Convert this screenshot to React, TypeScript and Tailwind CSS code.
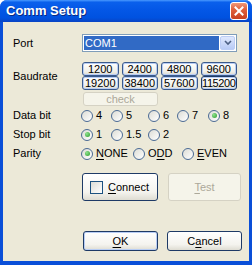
import React from 'react'

const font = { fontFamily: '"Liberation Sans", Arial, sans-serif' }

const BaudButton = ({ label, dark }: { label: string; dark?: boolean }) => (
  <div
    className={`h-[14px] flex items-center justify-center rounded-[3px] border bg-[linear-gradient(to_bottom,#ffffff,#f0f0ea_70%,#dcdad0)] text-[11px] leading-none text-black shadow-[inset_0_0_0_1px_#b8cdf4] ${dark ? 'border-[#1e3a66]' : 'border-[#3a5a8c]'}`}
  >
    <span className={label.length > 5 ? 'tracking-[-0.4px]' : ''}>{label}</span>
  </div>
)

const Radio = ({ label, checked, w, u }: { label: string; checked?: boolean; w?: string; u?: number }) => (
  <div className={`flex items-center gap-[3px] ${w ?? ''}`}>
    <span className="relative size-[12px] shrink-0 rounded-full border border-[#4a6a94] bg-[linear-gradient(135deg,#dcdcd5,#ffffff)] flex items-center justify-center">
      {checked && <span className="size-[5px] rounded-full bg-[radial-gradient(circle_at_35%_35%,#8fe28f,#2a9a2a)]" />}
    </span>
    <span className="text-[11px] leading-none text-black">
      {u === undefined ? (
        label
      ) : (
        <>
          {label.slice(0, u)}
          <span className="underline underline-offset-[2px]">{label[u]}</span>
          {label.slice(u + 1)}
        </>
      )}
    </span>
  </div>
)

export default function App() {
  return (
    <div style={font} className="w-[252px] h-[265px] flex flex-col bg-[#0a4fd8] rounded-t-[7px] overflow-hidden select-none">
      {/* title bar */}
      <div className="h-[22px] shrink-0 flex items-center justify-between pl-[6px] pr-[4px] bg-[linear-gradient(to_bottom,#4a9aff_0%,#0a60ec_10%,#0457e6_45%,#0052e0_80%,#0a44c4_100%)]">
        <span className="text-[13px] font-bold text-white [text-shadow:1px_1px_0_#0a2a80]">Comm Setup</span>
        <div className="size-[18px] rounded-[3px] border border-white bg-[linear-gradient(to_bottom,#f0997a,#e0603c_40%,#c8401f)] flex items-center justify-center">
          <svg width="10" height="10" viewBox="0 0 10 10">
            <path d="M1.5 1.5 L8.5 8.5 M8.5 1.5 L1.5 8.5" stroke="white" strokeWidth="2" strokeLinecap="square" />
          </svg>
        </div>
      </div>

      {/* body */}
      <div className="flex-1 mx-[3px] mb-[4px] bg-[#ece9d8] pl-[10px] pt-[12px] text-[11px] text-black flex flex-col">
        <div className="flex items-center h-[18px]">
          <span className="w-[69px]">Port</span>
          <div className="w-[155px] h-[18px] border border-[#7f9db9] bg-white flex items-stretch p-[1px]">
            <div className="flex-1 bg-[#316ac5] text-white flex items-center pl-[1px] leading-none">COM1</div>
            <div className="w-[15px] ml-[1px] rounded-[2px] border border-[#bccdf5] bg-[linear-gradient(to_bottom,#dfe8fd,#b8cbf6)] flex items-center justify-center">
              <svg width="8" height="6" viewBox="0 0 8 6">
                <path d="M1 1 L4 4 L7 1" stroke="#4d6185" strokeWidth="1.6" fill="none" />
              </svg>
            </div>
          </div>
        </div>

        <div className="flex items-center mt-[10px]">
          <span className="w-[69px]">Baudrate</span>
          <div className="w-[155px] grid grid-cols-4 gap-x-[3px]">
            <BaudButton label="1200" />
            <BaudButton label="2400" />
            <BaudButton label="4800" />
            <BaudButton label="9600" />
            <BaudButton label="19200" />
            <BaudButton label="38400" />
            <BaudButton label="57600" />
            <BaudButton label="115200" dark />
          </div>
        </div>

        <div className="flex mt-[2px]">
          <div className="ml-[70px] w-[75px] h-[14px] rounded-[3px] border border-[#d5d2c4] bg-[#f5f4ea] text-[#aca899] flex items-center justify-center leading-none">
            check
          </div>
        </div>

        <div className="flex items-center h-[19px]">
          <span className="w-[68px]">Data bit</span>
          <Radio label="4" w="w-[30px]" />
          <Radio label="5" w="w-[37px]" />
          <Radio label="6" w="w-[29px]" />
          <Radio label="7" w="w-[31px]" />
          <Radio label="8" checked />
        </div>
        <div className="flex items-center h-[19px]">
          <span className="w-[68px]">Stop bit</span>
          <Radio label="1" checked w="w-[30px]" />
          <Radio label="1.5" w="w-[37px]" />
          <Radio label="2" />
        </div>
        <div className="flex items-center h-[19px]">
          <span className="w-[68px]">Parity</span>
          <Radio label="NONE" checked w="w-[52px]" u={0} />
          <Radio label="ODD" w="w-[49px]" u={1} />
          <Radio label="EVEN" u={0} />
        </div>

        <div className="flex mt-[10px] ml-[69px] gap-[10px]">
          <div className="w-[76px] h-[28px] rounded-[3px] border border-[#1e3a66] bg-[linear-gradient(to_bottom,#ffffff,#f4f3ee_70%,#dedcd2)] flex items-center pl-[7px] gap-[5px]">
            <span className="size-[13px] border border-[#1c5180] bg-[linear-gradient(135deg,#dcdcd5,#ffffff)]" />
            <span className="leading-none">
              <span className="underline underline-offset-[2px]">C</span>onnect
            </span>
          </div>
          <div className="w-[73px] h-[28px] rounded-[3px] border border-[#d5d2c4] bg-[#f5f4ea] text-[#aca899] flex items-center justify-center leading-none">
            <span>
              <span className="underline underline-offset-[2px]">T</span>est
            </span>
          </div>
        </div>

        <div className="flex mt-[30px] ml-[70px] gap-[9px]">
          <div className="w-[75px] h-[20px] rounded-[3px] border border-[#1e3a66] bg-[linear-gradient(to_bottom,#ffffff,#f4f3ee_70%,#dedcd2)] shadow-[inset_0_0_0_1px_#b8cdf4] flex items-center justify-center leading-none">
            <span>
              <span className="underline underline-offset-[2px]">O</span>K
            </span>
          </div>
          <div className="w-[75px] h-[20px] rounded-[3px] border border-[#1e3a66] bg-[linear-gradient(to_bottom,#ffffff,#f4f3ee_70%,#dedcd2)] flex items-center justify-center leading-none">
            <span>
              C<span className="underline underline-offset-[2px]">a</span>ncel
            </span>
          </div>
        </div>
      </div>
    </div>
  )
}
